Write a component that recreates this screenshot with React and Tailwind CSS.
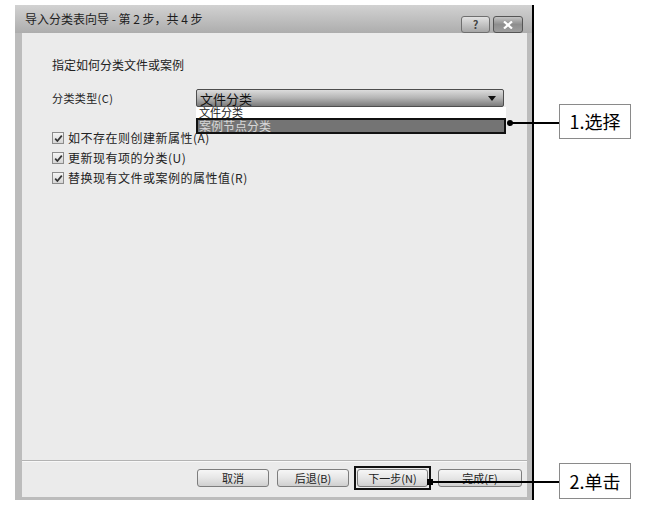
import React from 'react';

const font = { fontFamily: '"Noto Sans CJK SC", "Liberation Sans", sans-serif' };

function Check() {
  return (
    <span className="w-[12px] h-[12px] border border-[#8c8c8c] bg-gradient-to-b from-[#f4f4f4] to-[#d6d6d6] flex items-center justify-center">
      <svg width="9" height="9" viewBox="0 0 9 9">
        <path d="M1.2 4.6 L3.4 7 L7.8 1.6" fill="none" stroke="#333" strokeWidth="1.7" />
      </svg>
    </span>
  );
}

function Btn({ children, w = 'w-[72px]' }) {
  return (
    <div
      className={`${w} h-[18px] rounded-[3px] border border-[#7d7d7d] bg-gradient-to-b from-[#f6f6f6] via-[#e6e6e6] to-[#cfcfcf] flex items-center justify-center text-[11px] text-[#222] leading-none`}
    >
      {children}
    </div>
  );
}

export default function App() {
  const options = [
    '如不存在则创建新属性(A)',
    '更新现有项的分类(U)',
    '替换现有文件或案例的属性值(R)',
  ];

  return (
    <div className="relative w-[650px] h-[509px] bg-white overflow-hidden" style={font}>
      {/* dialog */}
      <div className="ml-[15px] mt-[5px] w-[519px] h-[495px] bg-[#bcbcbc] border-r-2 border-black flex flex-col pl-[7px] pr-[5px] pb-[3px]">
        <div className="h-[28px] -ml-[7px] -mr-[5px] pl-[10px] pr-[9px] bg-gradient-to-b from-[#d2d2d2] to-[#adadad] flex justify-between">
          <span className="text-[12px] text-[#1e1e1e] leading-none self-center">
            导入分类表向导 - 第 2 步，共 4 步
          </span>
          <div className="flex gap-[3px] self-end">
            <div className="w-[29px] h-[17px] rounded-[3px] border border-[#6f6f6f] bg-gradient-to-b from-[#e2e2e2] to-[#a6a6a6] flex items-center justify-center text-[11px] font-bold text-[#444] leading-none">
              ?
            </div>
            <div className="w-[30px] h-[17px] rounded-[3px] border border-[#555] bg-gradient-to-b from-[#c4c4c4] via-[#8e8e8e] to-[#9e9e9e] flex items-center justify-center">
              <svg width="10" height="8" viewBox="0 0 10 8">
                <path d="M1 0.5 L9 7.5 M9 0.5 L1 7.5" stroke="#fff" strokeWidth="2.2" />
              </svg>
            </div>
          </div>
        </div>

        <div className="flex-1 bg-[#ebebeb] flex flex-col">
          <div className="flex-1 pl-[30px] pt-[25px] flex flex-col text-[12px] text-[#222]">
            <div className="h-[14px] leading-[14px]">指定如何分类文件或案例</div>

            <div className="mt-[17px] flex items-center">
              <span className="w-[144px] text-[11px] leading-none tracking-[0.4px]">分类类型(C)</span>
              <div className="relative w-[308px] h-[18px] rounded-[2px] border border-[#4d4d4d] bg-gradient-to-b from-[#dcdcdc] via-[#b4b4b4] to-[#7c7c7c] flex items-center justify-between pl-[3px] pr-[7px]">
                <span className="text-[13px] text-[#111] leading-none">文件分类</span>
                <svg width="8" height="5" viewBox="0 0 8 5">
                  <path d="M0 0 H8 L4 5 Z" fill="#111" />
                </svg>
                {/* opened list */}
                <div className="absolute left-[-1px] top-[17px] w-[310px] flex flex-col">
                  <div className="h-[11px] bg-white pl-[3px] text-[11px] leading-[11px] text-[#222]">
                    文件分类
                  </div>
                  <div className="h-[16px] bg-[#747474] border-2 border-[#111] pl-[1px] text-[12px] leading-[12px] text-[#d8d8d8]">
                    案例节点分类
                  </div>
                </div>
              </div>
            </div>

            <div className="mt-[21px] flex flex-col">
              {options.map((t) => (
                <div key={t} className="h-[20px] flex items-center gap-[4px]">
                  <Check />
                  <span className="text-[12px] leading-none tracking-[0.5px]">{t}</span>
                </div>
              ))}
            </div>
          </div>

          <div className="h-[1px] bg-[#b3b3b3]" />
          <div className="h-[1px] bg-[#f8f8f8]" />

          <div className="h-[35px] pt-[7px] pr-[5px] flex items-start justify-end gap-[8px]">
            <Btn>取消</Btn>
            <Btn>后退(B)</Btn>
            <div className="-my-[3px] -mx-[3px] p-[1px] border-2 border-[#111]">
              <Btn w="w-[71px]">下一步(N)</Btn>
            </div>
            <div className="ml-[2px]">
              <Btn w="w-[84px]">完成(F)</Btn>
            </div>
          </div>
        </div>
      </div>

      {/* callout 1 */}
      <div className="absolute left-[507px] top-[120px] w-[6px] h-[6px] rounded-full bg-black" />
      <div className="absolute left-[510px] top-[122px] w-[50px] h-[2px] bg-black" />
      <div className="absolute left-[559px] top-[104px] w-[72px] h-[35px] border border-[#8a8a8a] bg-white flex items-center justify-center text-[18px] text-black">
        1.选择
      </div>

      {/* callout 2 */}
      <div className="absolute left-[427px] top-[479px] w-[6px] h-[6px] bg-black" />
      <div className="absolute left-[430px] top-[481px] w-[130px] h-[2px] bg-black" />
      <div className="absolute left-[559px] top-[463px] w-[72px] h-[36px] border border-[#8a8a8a] bg-white flex items-center justify-center text-[18px] text-black">
        2.单击
      </div>
    </div>
  );
}
